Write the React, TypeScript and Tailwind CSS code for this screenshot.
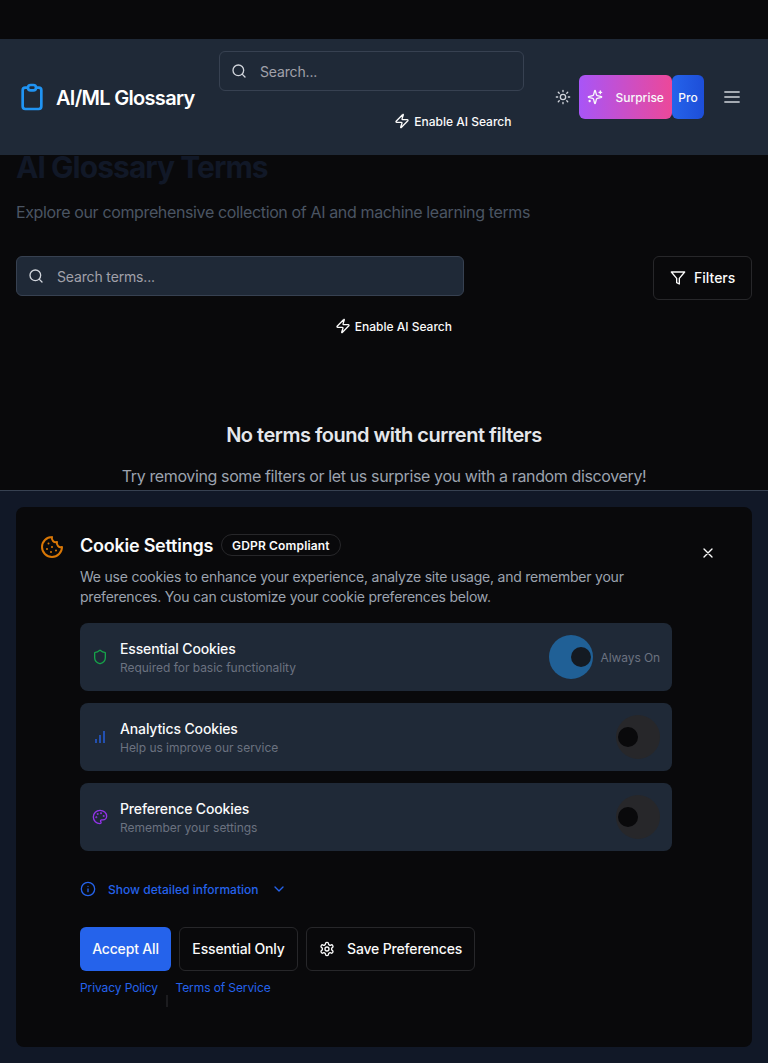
import React from "react";

type IconProps = { className?: string; strokeWidth?: number; children: React.ReactNode };

function Icon({ className = "size-4", strokeWidth = 2, children }: IconProps) {
  return (
    <svg
      viewBox="0 0 24 24"
      fill="none"
      stroke="currentColor"
      strokeWidth={strokeWidth}
      strokeLinecap="round"
      strokeLinejoin="round"
      className={"shrink-0 " + className}
    >
      {children}
    </svg>
  );
}

const SearchIcon = () => (
  <Icon className="size-4 text-gray-300">
    <circle cx="11" cy="11" r="8" />
    <path d="m21 21-4.3-4.3" />
  </Icon>
);

function AiSearchToggle() {
  return (
    <button className="flex items-center gap-1 text-xs font-medium leading-4 text-neutral-50">
      <Icon>
        <path d="M4 14a1 1 0 0 1-.78-1.63l9.9-10.2a.5.5 0 0 1 .86.46l-1.92 6.02A1 1 0 0 0 13 10h7a1 1 0 0 1 .78 1.63l-9.9 10.2a.5.5 0 0 1-.86-.46l1.92-6.02A1 1 0 0 0 11 14z" />
      </Icon>
      <span className="pt-0.5">Enable AI Search</span>
    </button>
  );
}

function Header() {
  return (
    <header className="relative z-10 flex h-[116px] shrink-0 items-center bg-[#1f2937] px-4">
      <div className="flex w-[202.5px] items-center gap-2">
        <Icon className="size-8 text-[#2094f3]">
          <path d="M9 5H7a2 2 0 00-2 2v12a2 2 0 002 2h10a2 2 0 002-2V7a2 2 0 00-2-2h-2M9 5a2 2 0 002 2h2a2 2 0 002-2M9 5a2 2 0 012-2h2a2 2 0 012 2" />
        </Icon>
        <span className="whitespace-nowrap pt-0.5 text-xl font-semibold tracking-[-0.7px] text-white">
          AI/ML Glossary
        </span>
      </div>
      <div className="flex w-[305px] flex-col items-end self-start pt-3">
        <div className="flex h-10 w-full items-center gap-[13.5px] rounded-md border border-[#374151] px-[11px] text-sm tracking-[-0.15px] text-[#a1a1aa]">
          <SearchIcon />
          <span className="pt-0.5">Search...</span>
        </div>
        <div className="pr-3 pt-[21px]">
          <AiSearchToggle />
        </div>
      </div>
      <div className="ml-auto flex items-center">
        <Icon className="mr-2 size-4 text-gray-300">
          <circle cx="12" cy="12" r="4" />
          <path d="M12 2v2M12 20v2m-7.07-17.07 1.41 1.41m11.32 11.32 1.41 1.41M2 12h2m16 0h2M6.34 17.66l-1.41 1.41M19.07 4.93l-1.41 1.41" />
        </Icon>
        <button className="flex h-11 w-[92.6px] items-center gap-3 rounded-md bg-[linear-gradient(to_right,#a855f7,#ec4899)] pl-2 text-xs font-medium text-gray-50">
          <Icon>
            <path d="M9.937 15.5A2 2 0 0 0 8.5 14.063l-6.135-1.582a.5.5 0 0 1 0-.962L8.5 9.936A2 2 0 0 0 9.937 8.5l1.582-6.135a.5.5 0 0 1 .963 0L14.063 8.5A2 2 0 0 0 15.5 9.937l6.135 1.581a.5.5 0 0 1 0 .964L15.5 14.063a2 2 0 0 0-1.437 1.437l-1.582 6.135a.5.5 0 0 1-.963 0zM20 3v4M22 5h-4M4 17v2M5 18H3" />
          </Icon>
          <span className="pt-0.5">Surprise</span>
        </button>
        <button className="h-11 w-8 rounded-md bg-[linear-gradient(to_right,#2563eb,#1d4ed8)] pt-0.5 text-xs font-medium text-gray-50">
          Pro
        </button>
        <button className="ml-[18px] mr-2.5 text-gray-300">
          <Icon className="size-5">
            <path d="M3.5 6h17M3.5 12h17M3.5 18h17" />
          </Icon>
        </button>
      </div>
    </header>
  );
}

function GlossaryPage() {
  return (
    <main className="-mt-1.5 flex h-[341px] shrink-0 flex-col px-4">
      <h1 className="text-3xl font-bold leading-9 tracking-[-0.96px] text-[#111827]">AI Glossary Terms</h1>
      <p className="mt-[15px] text-base leading-6 tracking-[-0.365px] text-[#4b5563]">
        Explore our comprehensive collection of AI and machine learning terms
      </p>
      <div className="mt-8 flex items-start justify-between">
        <div className="flex w-[448px] flex-col items-end">
          <div className="flex h-10 w-full items-center gap-[13px] rounded-md border border-[#374151] bg-[#1f2937] px-[11px] text-sm tracking-[-0.15px] text-[#a1a1aa]">
            <SearchIcon />
            <span className="pt-0.5">Search terms...</span>
          </div>
          <div className="pr-3 pt-[21px]">
            <AiSearchToggle />
          </div>
        </div>
        <button className="flex h-11 w-[99px] items-center gap-2 rounded-md border border-[#27272a] px-4 text-sm font-medium text-neutral-50">
          <Icon>
            <path d="M22 3H2l8 9.46V19l4 2v-8.54L22 3z" />
          </Icon>
          Filters
        </button>
      </div>
      <div className="pt-[86px] text-center">
        <h2 className="text-xl font-semibold leading-7 tracking-[-0.5px] text-[#e5e7eb]">
          No terms found with current filters
        </h2>
        <p className="mt-[15px] text-base leading-6 tracking-[-0.375px] text-[#9ca3af]">
          Try removing some filters or let us surprise you with a random discovery!
        </p>
      </div>
    </main>
  );
}

function Switch({ on = false }: { on?: boolean }) {
  return (
    <span
      className={
        on
          ? "flex size-11 items-center justify-end rounded-full bg-[#206096] pr-0.5"
          : "flex size-11 items-center rounded-full bg-[#27272a] pl-0.5"
      }
    >
      <span className={on ? "size-5 rounded-full bg-[#141a22]" : "size-5 rounded-full bg-[#09090b]"} />
    </span>
  );
}

type RowProps = { icon: React.ReactNode; title: string; note: string; always?: boolean };

function CookieRow({ icon, title, note, always }: RowProps) {
  return (
    <div className="flex h-17 items-center rounded-lg bg-[#1f2937] px-3">
      {icon}
      <div className="ml-3 flex-1">
        <p className="text-sm font-medium leading-5 tracking-[-0.14px] text-gray-50">{title}</p>
        <p className="-mb-px pt-px text-xs leading-4 tracking-[-0.03px] text-[#6b7280]">{note}</p>
      </div>
      <Switch on={always} />
      {always && <span className="ml-2 pt-0.5 text-xs tracking-[-0.1px] text-[#6b7280]">Always On</span>}
    </div>
  );
}

function CookieBanner() {
  return (
    <section className="relative flex-1 border-t border-[#374151] bg-[#111827] p-4">
      <div className="flex h-[540px] rounded-lg bg-[#09090b] px-6 pt-7">
        <Icon className="size-6 text-[#d97706]">
          <path d="M12 2a10 10 0 1 0 10 10 4 4 0 0 1-5-5 4 4 0 0 1-5-5M8.5 8.5v.01M16 15.5v.01M12 12v.01M11 17v.01M7 14v.01" />
        </Icon>
        <div className="ml-4 w-[592px]">
          <div className="-mt-1 flex h-7 items-center gap-2">
            <h3 className="pt-0.5 text-lg font-semibold tracking-[-0.24px] text-gray-50">Cookie Settings</h3>
            <span className="flex h-[22px] items-center rounded-full border border-[#27272a] px-2.5 pt-0.5 text-xs font-semibold tracking-[0.15px] text-neutral-50">
              GDPR Compliant
            </span>
          </div>
          <p className="mt-2 text-sm leading-5 tracking-[-0.225px] text-[#9ca3af]">
            We use cookies to enhance your experience, analyze site usage, and remember your
            <br />
            preferences. You can customize your cookie preferences below.
          </p>
          <div className="mt-4 flex flex-col gap-3">
            <CookieRow
              always
              title="Essential Cookies"
              note="Required for basic functionality"
              icon={
                <Icon className="size-4 text-[#16a34a]">
                  <path d="M20 13c0 5-3.5 7.5-7.66 8.95a1 1 0 0 1-.67-.01C7.5 20.5 4 18 4 13V6a1 1 0 0 1 1-1c2 0 4.5-1.2 6.24-2.72a1.17 1.17 0 0 1 1.52 0C14.51 3.81 17 5 19 5a1 1 0 0 1 1 1z" />
                </Icon>
              }
            />
            <CookieRow
              title="Analytics Cookies"
              note="Help us improve our service"
              icon={
                <svg viewBox="0 0 16 16" className="size-4 shrink-0 fill-[#2350b0]">
                  <path d="M3 10h2v4H3zM7 6h2v8H7zM11 2h2v12h-2z" />
                </svg>
              }
            />
            <CookieRow
              title="Preference Cookies"
              note="Remember your settings"
              icon={
                <Icon className="size-4 text-[#9333ea]">
                  <circle cx="13.5" cy="6.5" r=".5" fill="currentColor" />
                  <circle cx="17.5" cy="10.5" r=".5" fill="currentColor" />
                  <circle cx="8.5" cy="7.5" r=".5" fill="currentColor" />
                  <circle cx="6.5" cy="12.5" r=".5" fill="currentColor" />
                  <path d="M12 2C6.5 2 2 6.5 2 12s4.5 10 10 10c.926 0 1.648-.746 1.648-1.688 0-.437-.18-.835-.437-1.125-.29-.289-.438-.652-.438-1.125a1.64 1.64 0 0 1 1.668-1.668h1.996c3.051 0 5.555-2.503 5.555-5.554C21.965 6.012 17.461 2 12 2z" />
                </Icon>
              }
            />
          </div>
          <button className="mt-4 flex h-11 items-center text-xs font-medium text-[#2563eb]">
            <Icon>
              <circle cx="12" cy="12" r="10" />
              <path d="M12 16v-4M12 8h.01" />
            </Icon>
            <span className="mx-3 pt-0.5 tracking-[0.03px]">Show detailed information</span>
            <Icon>
              <path d="m6 9 6 6 6-6" />
            </Icon>
          </button>
          <div className="mt-4 flex gap-2 text-sm font-medium tracking-[-0.16px] text-neutral-50">
            <button className="h-11 w-[91px] rounded-md bg-[#2563eb]">Accept All</button>
            <button className="h-11 w-[119px] rounded-md border border-[#27272a]">Essential Only</button>
            <button className="flex h-11 w-[169px] items-center gap-3 rounded-md border border-[#27272a] pl-3">
              <Icon>
                <path d="M12.22 2h-.44a2 2 0 0 0-2 2v.18a2 2 0 0 1-1 1.73l-.43.25a2 2 0 0 1-2 0l-.15-.08a2 2 0 0 0-2.73.73l-.22.38a2 2 0 0 0 .73 2.73l.15.1a2 2 0 0 1 1 1.72v.51a2 2 0 0 1-1 1.74l-.15.09a2 2 0 0 0-.73 2.73l.22.38a2 2 0 0 0 2.73.73l.15-.08a2 2 0 0 1 2 0l.43.25a2 2 0 0 1 1 1.73V20a2 2 0 0 0 2 2h.44a2 2 0 0 0 2-2v-.18a2 2 0 0 1 1-1.73l.43-.25a2 2 0 0 1 2 0l.15.08a2 2 0 0 0 2.73-.73l.22-.39a2 2 0 0 0-.73-2.73l-.15-.08a2 2 0 0 1-1-1.74v-.5a2 2 0 0 1 1-1.74l.15-.09a2 2 0 0 0 .73-2.73l-.22-.38a2 2 0 0 0-2.73-.73l-.15.08a2 2 0 0 1-2 0l-.43-.25a2 2 0 0 1-1-1.73V4a2 2 0 0 0-2-2z" />
                <circle cx="12" cy="12" r="3" />
              </Icon>
              Save Preferences
            </button>
          </div>
          <div className="mt-[9px] flex gap-2 text-xs tracking-[-0.1px] text-[#2563eb]">
            <a>Privacy Policy</a>
            <span className="mt-[15px] h-3 w-[1.5px] bg-[#1c1c1f]" />
            <a>Terms of Service</a>
          </div>
        </div>
        <button className="ml-7 mt-2.5 self-start text-neutral-50">
          <Icon>
            <path d="M18 6 6 18M6 6l12 12" />
          </Icon>
        </button>
      </div>
    </section>
  );
}

export default function App() {
  return (
    <div className="flex h-[1063px] w-full flex-col overflow-hidden bg-[#09090b] pt-[39px] font-['Inter',sans-serif]">
      <Header />
      <GlossaryPage />
      <CookieBanner />
    </div>
  );
}
